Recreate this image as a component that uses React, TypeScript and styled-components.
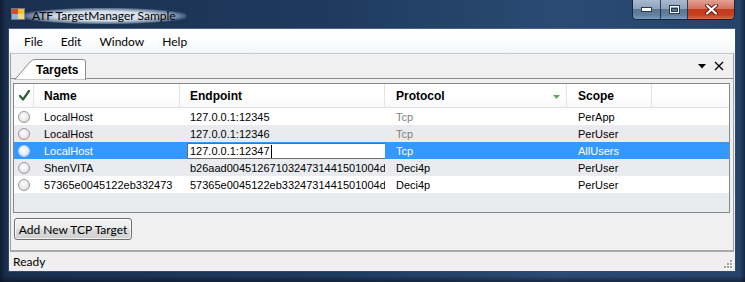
import React from "react";
import styled, { createGlobalStyle } from "styled-components";

const Global = createGlobalStyle`
  html, body { margin: 0; padding: 0; background: #13253d; }
  body { width: 745px; height: 282px; overflow: hidden; }
  * { box-sizing: border-box; }
`;

const UI = `"Lato", "Open Sans", sans-serif`;
const CELL = `"Liberation Sans", Arial, sans-serif`;

const Frame = styled.div`
  width: 745px;
  height: 282px;
  display: flex;
  flex-direction: column;
  padding: 0 10px 10px 9px;
  background:
    linear-gradient(90deg, rgba(8, 16, 30, 0.6) 0px, rgba(8, 16, 30, 0) 6px),
    linear-gradient(270deg, rgba(8, 16, 30, 0.55) 0px, rgba(8, 16, 30, 0) 5px),
    linear-gradient(0deg, rgba(8, 16, 30, 0.6) 0px, rgba(8, 16, 30, 0) 6px),
    linear-gradient(90deg, #1a2f4e 0%, #1f3a5f 45%, #2a4b74 75%, #25426a 100%);
`;

const TitleBar = styled.div`
  height: 28px;
  display: flex;
  align-items: flex-start;
  position: relative;
`;

const AppIcon = styled.svg`
  margin: 8px 0 0 2px;
  flex: none;
`;

const Title = styled.div`
  font-family: ${UI};
  font-size: 12px;
  color: #000;
  margin: 8px 0 0 -3px;
  padding: 0 10px;
  line-height: 16px;
  background: radial-gradient(ellipse at center, rgba(225, 234, 244, 0.95) 40%, rgba(190, 208, 228, 0.5) 65%, rgba(190, 208, 228, 0) 75%);
`;

const Caption = styled.div`
  position: absolute;
  top: 0;
  right: 0;
  height: 20px;
  display: flex;
  border: 1px solid #16263c;
  border-top: none;
  border-radius: 0 0 5px 5px;
  overflow: hidden;
  box-shadow: inset 0 0 0 1px rgba(255, 255, 255, 0.3);
`;

const CapButton = styled.div<{ $w: number; $close?: boolean }>`
  width: ${(p) => p.$w}px;
  height: 100%;
  display: flex;
  align-items: center;
  justify-content: center;
  border-right: 1px solid rgba(20, 35, 55, 0.8);
  background: ${(p) =>
    p.$close
      ? "linear-gradient(180deg, #e3a093 0%, #d4735f 45%, #c2391c 50%, #c6401f 80%, #d9703f 100%)"
      : "linear-gradient(180deg, #a9b9ce 0%, #8ea3bd 45%, #5b7696 50%, #62809f 80%, #7e9cbf 100%)"};
  &:last-child { border-right: none; }
`;

const Client = styled.div`
  flex: 1;
  display: flex;
  flex-direction: column;
  background: #f0f0f0;
  border: 1px solid #34496a;
  border-top-color: #4b6384;
  margin-left: -1px;
  margin-right: -1px;
`;

const MenuBar = styled.div`
  height: 24px;
  display: flex;
  align-items: center;
  padding: 2px 0 0 6px;
  background: linear-gradient(180deg, #ffffff 0%, #fbfcfd 60%, #f3f5f8 100%);
`;

const MenuItem = styled.div`
  font-family: ${UI};
  font-size: 12px;
  color: #000;
  padding: 0 9px;
  line-height: 16px;
`;

const DockArea = styled.div`
  height: 199px;
  display: flex;
  flex-direction: column;
  margin: 0 1px 0 1px;
  border-top: 1px solid #c6c9cf;
  border-left: 1px solid #a0a0a0;
  border-right: 1px solid #a0a0a0;
  border-bottom: 2px solid #a9a9a9;
`;

const TabStrip = styled.div`
  height: 25px;
  display: flex;
  align-items: flex-end;
  border-bottom: 1px solid #8d8d8d;
  position: relative;
`;

const TabShape = styled.div`
  position: relative;
  width: 72px;
  height: 20px;
  margin: 0 0 -1px 3px;
  font-family: ${CELL};
  font-weight: bold;
  font-size: 12px;
  color: #000;
  display: flex;
  align-items: center;
  padding: 1px 0 0 22px;
  z-index: 1;
`;

const TabOutline = styled.svg`
  position: absolute;
  left: 0;
  top: 0;
`;

const TabLabel = styled.span`
  position: relative;
`;

const TabTools = styled.div`
  margin-left: auto;
  align-self: center;
  display: flex;
  align-items: center;
  gap: 8px;
  padding: 0 9px 0 0;
`;

const PanelBody = styled.div`
  flex: 1;
  display: flex;
  flex-direction: column;
  align-items: flex-start;
  padding: 4px 2px 0 2px;
`;

const Grid = styled.div`
  width: 717px;
  height: 130px;
  border: 1px solid #828790;
  background: #e9ebef;
  display: flex;
  flex-direction: column;
`;

const COLS = "20px 146px 205px 182px 85px 1fr";

const HeaderRow = styled.div`
  height: 24px;
  display: grid;
  grid-template-columns: ${COLS};
  background: linear-gradient(180deg, #ffffff 0%, #ffffff 50%, #f7f8f9 100%);
  border-bottom: 1px solid #e2e3e6;
`;

const HeadCell = styled.div<{ $pad?: number }>`
  font-family: ${CELL};
  font-weight: bold;
  font-size: 12px;
  color: #000;
  display: flex;
  align-items: center;
  padding-left: ${(p) => p.$pad ?? 10}px;
  border-right: 1px solid #e3e4e7;
  position: relative;
  &:last-child { border-right: none; }
`;

const SortArrow = styled.svg`
  position: absolute;
  right: 6px;
  top: 11px;
`;

const Row = styled.div<{ $alt?: boolean; $sel?: boolean }>`
  height: 17px;
  display: grid;
  grid-template-columns: ${COLS};
  background: ${(p) => (p.$sel ? "#3399ff" : p.$alt ? "#e9ebef" : "#ffffff")};
`;

const Cell = styled.div<{ $pad?: number; $muted?: boolean; $sel?: boolean }>`
  font-family: ${CELL};
  font-size: 11px;
  color: ${(p) => (p.$sel ? "#ffffff" : p.$muted ? "#7f7f7f" : "#000000")};
  display: flex;
  align-items: center;
  padding-left: ${(p) => p.$pad ?? 10}px;
  white-space: nowrap;
  overflow: hidden;
`;

const RadioCell = styled.div`
  display: flex;
  align-items: center;
  padding-left: 4px;
`;

const Radio = styled.div<{ $sel?: boolean }>`
  width: 12px;
  height: 12px;
  border-radius: 50%;
  border: 1px solid ${(p) => (p.$sel ? "#b9cde6" : "#9a9a9a")};
  background: ${(p) =>
    p.$sel
      ? "radial-gradient(circle at 45% 40%, #ffffff 0%, #e3ecf7 55%, #c4d5ea 100%)"
      : "radial-gradient(circle at 45% 40%, #ffffff 0%, #ececec 50%, #c9c9c9 100%)"};
`;

const EditCell = styled.div`
  display: flex;
  align-items: stretch;
  padding: 1px 0 0 7px;
`;

const EditBox = styled.div`
  flex: 1;
  background: #ffffff;
  border: 1px solid #6d6d6d;
  border-right: none;
  font-family: ${CELL};
  font-size: 11px;
  color: #000;
  display: flex;
  align-items: center;
  padding-left: 2px;
`;

const Caret = styled.span`
  display: inline-block;
  width: 1px;
  height: 13px;
  background: #000;
  margin-left: 1px;
`;

const Fill = styled.div`
  flex: 1;
  background: #e9ebef;
`;

const Button = styled.div`
  margin: 5px 0 0 1px;
  width: 118px;
  height: 22px;
  border: 1px solid #707070;
  border-radius: 3px;
  background: linear-gradient(180deg, #f2f2f2 0%, #ebebeb 50%, #dddddd 50%, #cfcfcf 100%);
  box-shadow: inset 0 0 0 1px rgba(255, 255, 255, 0.7);
  font-family: ${UI};
  font-size: 12px;
  color: #000;
  display: flex;
  align-items: center;
  justify-content: center;
`;

const StatusBar = styled.div`
  flex: 1;
  display: flex;
  align-items: center;
  padding: 0 0 0 4px;
  background: #f0eeee;
  font-family: ${UI};
  font-size: 12px;
  color: #000;
  position: relative;
`;

const Grip = styled.svg`
  position: absolute;
  right: 2px;
  bottom: 2px;
`;

type RowData = { name: string; endpoint: string; protocol: string; scope: string; muted?: boolean };

const rows: RowData[] = [
  { name: "LocalHost", endpoint: "127.0.0.1:12345", protocol: "Tcp", scope: "PerApp", muted: true },
  { name: "LocalHost", endpoint: "127.0.0.1:12346", protocol: "Tcp", scope: "PerUser", muted: true },
  { name: "LocalHost", endpoint: "127.0.0.1:12347", protocol: "Tcp", scope: "AllUsers", muted: true },
  { name: "ShenVITA", endpoint: "b26aad0045126710324731441501004d", protocol: "Deci4p", scope: "PerUser" },
  { name: "57365e0045122eb332473", endpoint: "57365e0045122eb3324731441501004d", protocol: "Deci4p", scope: "PerUser" },
];

const SELECTED = 2;

export default function App() {
  return (
    <>
      <Global />
      <Frame>
        <TitleBar>
          <AppIcon width="14" height="12" viewBox="0 0 14 12">
            <rect x="0.5" y="0.5" width="13" height="11" fill="#e8e8e8" stroke="#7a7a7a" />
            <rect x="1" y="1" width="6" height="5" fill="#d9482b" />
            <rect x="7" y="1" width="6" height="5" fill="#f2c434" />
            <rect x="1" y="6" width="6" height="5" fill="#8fb5e0" />
            <rect x="7" y="6" width="6" height="5" fill="#f3dc7a" />
          </AppIcon>
          <Title>ATF TargetManager Sample</Title>
          <Caption>
            <CapButton $w={28}>
              <svg width="11" height="5" viewBox="0 0 11 5">
                <rect x="0.5" y="0.5" width="10" height="4" fill="#ffffff" stroke="#2a3a50" />
              </svg>
            </CapButton>
            <CapButton $w={27}>
              <svg width="11" height="9" viewBox="0 0 11 9">
                <rect x="0.5" y="0.5" width="10" height="8" fill="none" stroke="#2a3a50" />
                <rect x="1.5" y="1.5" width="8" height="6" fill="none" stroke="#ffffff" />
                <rect x="2.5" y="3.5" width="6" height="3" fill="none" stroke="#2a3a50" />
              </svg>
            </CapButton>
            <CapButton $w={46} $close>
              <svg width="13" height="11" viewBox="0 0 13 11">
                <path d="M2 1.5 L11 9.5 M11 1.5 L2 9.5" stroke="#5a1a10" strokeWidth="4" strokeLinecap="round" />
                <path d="M2 1.5 L11 9.5 M11 1.5 L2 9.5" stroke="#ffffff" strokeWidth="2.2" strokeLinecap="round" />
              </svg>
            </CapButton>
          </Caption>
        </TitleBar>
        <Client>
          <MenuBar>
            <MenuItem>File</MenuItem>
            <MenuItem>Edit</MenuItem>
            <MenuItem>Window</MenuItem>
            <MenuItem>Help</MenuItem>
          </MenuBar>
          <DockArea>
            <TabStrip>
              <TabShape>
                <TabOutline width="72" height="21" viewBox="0 0 72 21">
                  <path d="M0.5 21 L16 3 Q18 0.5 21 0.5 L69 0.5 Q71.5 0.5 71.5 3 L71.5 21 Z" fill="#ffffff" stroke="#8d8d8d" />
                </TabOutline>
                <TabLabel>Targets</TabLabel>
              </TabShape>
              <TabTools>
                <svg width="8" height="5" viewBox="0 0 8 5">
                  <path d="M0 0 L8 0 L4 4.5 Z" fill="#000" />
                </svg>
                <svg width="10" height="10" viewBox="0 0 10 10">
                  <path d="M1 1 L9 9 M9 1 L1 9" stroke="#000" strokeWidth="1.3" />
                </svg>
              </TabTools>
            </TabStrip>
            <PanelBody>
              <Grid>
                <HeaderRow>
                  <HeadCell $pad={5}>
                    <svg width="11" height="11" viewBox="0 0 11 11">
                      <path d="M1 6 L4 9.5 L10 1" stroke="#2f5f33" strokeWidth="2.2" fill="none" strokeLinecap="round" strokeLinejoin="round" />
                    </svg>
                  </HeadCell>
                  <HeadCell>Name</HeadCell>
                  <HeadCell>Endpoint</HeadCell>
                  <HeadCell $pad={11}>
                    Protocol
                    <SortArrow width="7" height="4" viewBox="0 0 7 4">
                      <path d="M0 0 L7 0 L3.5 4 Z" fill="#6aa55a" />
                    </SortArrow>
                  </HeadCell>
                  <HeadCell $pad={11}>Scope</HeadCell>
                  <HeadCell />
                </HeaderRow>
                {rows.map((r, i) => {
                  const sel = i === SELECTED;
                  return (
                    <Row key={i} $alt={i % 2 === 1} $sel={sel}>
                      <RadioCell>
                        <Radio $sel={sel} />
                      </RadioCell>
                      <Cell $sel={sel}>{r.name}</Cell>
                      {sel ? (
                        <EditCell>
                          <EditBox>
                            {r.endpoint}
                            <Caret />
                          </EditBox>
                        </EditCell>
                      ) : (
                        <Cell>{r.endpoint}</Cell>
                      )}
                      <Cell $pad={11} $muted={r.muted} $sel={sel}>
                        {r.protocol}
                      </Cell>
                      <Cell $pad={11} $sel={sel}>
                        {r.scope}
                      </Cell>
                      <Cell />
                    </Row>
                  );
                })}
                <Fill />
              </Grid>
              <Button>Add New TCP Target</Button>
            </PanelBody>
          </DockArea>
          <StatusBar>
            Ready
            <Grip width="10" height="10" viewBox="0 0 10 10">
              {[
                [7, 1],
                [7, 4],
                [4, 4],
                [7, 7],
                [4, 7],
                [1, 7],
              ].map(([x, y], k) => (
                <g key={k}>
                  <rect x={x + 1} y={y + 1} width="2" height="2" fill="#ffffff" />
                  <rect x={x} y={y} width="2" height="2" fill="#a0a0a0" />
                </g>
              ))}
            </Grip>
          </StatusBar>
        </Client>
      </Frame>
    </>
  );
}
